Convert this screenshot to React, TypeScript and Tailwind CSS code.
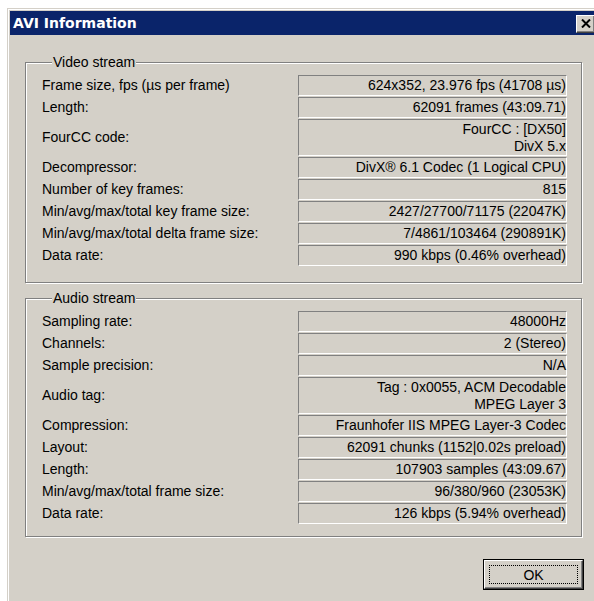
import type { ReactNode } from "react";

type Row = {
  label: string;
  value: string[];
};

const videoRows: Row[] = [
  { label: "Frame size, fps (µs per frame)", value: ["624x352, 23.976 fps (41708 µs)"] },
  { label: "Length:", value: ["62091 frames (43:09.71)"] },
  { label: "FourCC code:", value: ["FourCC : [DX50]", "DivX 5.x"] },
  { label: "Decompressor:", value: ["DivX® 6.1 Codec (1 Logical CPU)"] },
  { label: "Number of key frames:", value: ["815"] },
  { label: "Min/avg/max/total key frame size:", value: ["2427/27700/71175 (22047K)"] },
  { label: "Min/avg/max/total delta frame size:", value: ["7/4861/103464 (290891K)"] },
  { label: "Data rate:", value: ["990 kbps (0.46% overhead)"] },
];

const audioRows: Row[] = [
  { label: "Sampling rate:", value: ["48000Hz"] },
  { label: "Channels:", value: ["2 (Stereo)"] },
  { label: "Sample precision:", value: ["N/A"] },
  { label: "Audio tag:", value: ["Tag : 0x0055, ACM Decodable", "MPEG Layer 3"] },
  { label: "Compression:", value: ["Fraunhofer IIS MPEG Layer-3 Codec"] },
  { label: "Layout:", value: ["62091 chunks (1152|0.02s preload)"] },
  { label: "Length:", value: ["107903 samples (43:09.67)"] },
  { label: "Min/avg/max/total frame size:", value: ["96/380/960 (23053K)"] },
  { label: "Data rate:", value: ["126 kbps (5.94% overhead)"] },
];

const InfoRow = ({ row }: { row: Row }) => {
  const tall = row.value.length > 1;
  return (
    <div className="flex items-center">
      <span className="w-[256px] leading-[17px]">{row.label}</span>
      <div
        className={`flex w-[269px] flex-col items-end justify-center border-t border-l border-t-[#808080] border-l-[#808080] border-b border-r border-b-white border-r-white leading-[17px] ${
          tall ? "h-[37px]" : "h-[21px]"
        }`}
      >
        {row.value.map((line) => (
          <span key={line} className="whitespace-nowrap">
            {line}
          </span>
        ))}
      </div>
    </div>
  );
};

const GroupBox = ({
  title,
  className,
  children,
}: {
  title: string;
  className: string;
  children: ReactNode;
}) => (
  <fieldset
    className={`ml-[15px] w-[557px] border border-[#808080] pl-[16px] shadow-[inset_1px_1px_0_#fff,1px_1px_0_#fff] ${className}`}
  >
    <legend className="ml-[10px] bg-[#d4d0c8] px-[1px] leading-[16px]">{title}</legend>
    <div className="flex flex-col gap-[1px]">{children}</div>
  </fieldset>
);

export default function App() {
  return (
    <div className="h-[601px] w-[594px] overflow-hidden bg-white font-['Liberation_Sans',Arial,sans-serif] text-[14px] text-black">
      <div className="ml-[7px] mt-[8px] h-[610px] w-[590px] border-t border-l border-[#d4d0c8] bg-[#d4d0c8] shadow-[inset_1px_1px_0_#fff]">
        <div className="ml-[2px] mt-[2px]">
          {/* title bar */}
          <div className="flex h-[24px] items-center justify-between bg-[#0a246a] pl-[3px] pr-[2px]">
            <span className="font-['DejaVu_Sans',sans-serif] text-[14px] font-bold text-white">
              AVI Information
            </span>
            <button className="mt-[1px] flex h-[18px] w-[19px] items-center justify-center border-t border-l border-t-white border-l-white border-b border-r border-b-[#404040] border-r-[#404040] bg-[#d4d0c8] shadow-[inset_-1px_-1px_0_#808080]">
              <svg width="10" height="9" viewBox="0 0 10 9">
                <path d="M1 0.5 L9 8.5 M9 0.5 L1 8.5" stroke="#000" strokeWidth="2" />
              </svg>
            </button>
          </div>

          <GroupBox title="Video stream" className="mt-[19px] pt-[5px] pb-[16px]">
            {videoRows.map((row) => (
              <InfoRow key={row.label} row={row} />
            ))}
          </GroupBox>

          <GroupBox title="Audio stream" className="mt-[7px] pt-[5px] pb-[12px]">
            {audioRows.map((row) => (
              <InfoRow key={row.label + row.value[0]} row={row} />
            ))}
          </GroupBox>

          <div className="mt-[22px] pl-[473px]">
            <button className="flex h-[31px] w-[101px] border border-black bg-[#d4d0c8]">
              <div className="flex h-full w-full border-t border-l border-t-white border-l-white border-b border-r border-b-[#404040] border-r-[#404040] p-[4px] shadow-[inset_-1px_-1px_0_#808080]">
                <div className="flex h-full w-full items-center justify-center border border-dotted border-black leading-none">
                  OK
                </div>
              </div>
            </button>
          </div>
        </div>
      </div>
    </div>
  );
}
